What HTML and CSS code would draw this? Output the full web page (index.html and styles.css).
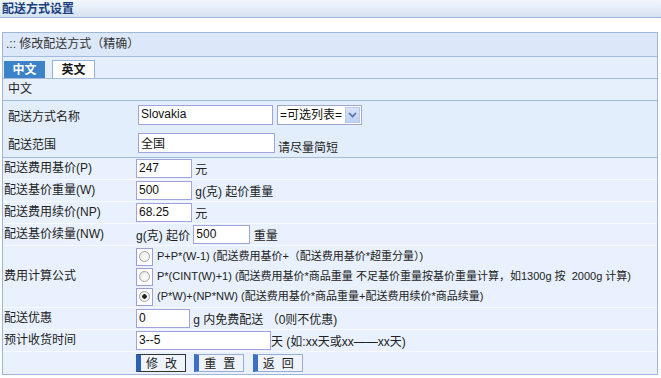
FILE: index.html
```html
<!DOCTYPE html>
<html lang="zh-CN">
<head>
    <meta charset="UTF-8">
    <title>配送方式设置</title>
    <link rel="stylesheet" href="styles.css">
</head>
<body>
    <div class="title">配送方式设置</div>
    <form class="panel">
        <div class="caption">.:: 修改配送方式（精确）</div>
        <div class="tabs">
            <span class="tab on">中文</span>
            <span class="tab off">英文</span>
        </div>
        <div class="lang">中文</div>
        <div class="names">
            <div class="row">
                <span class="label">配送方式名称</span>
                <input type="text" class="txt w135" value="Slovakia">
                <span class="pick">
                    <select><option>=可选列表=</option></select>
                    <span class="arrow"><svg width="9" height="6" viewBox="0 0 9 6"><path d="M1 1 L4.5 4.5 L8 1" fill="none" stroke="#4d6fa8" stroke-width="1.6"/></svg></span>
                </span>
            </div>
            <div class="row">
                <span class="label">配送范围</span>
                <input type="text" class="txt w137" value="全国">
                <span class="hint">请尽量简短</span>
            </div>
        </div>
        <table class="fields">
            <tr>
                <td class="label">配送费用基价(P)</td>
                <td class="val"><input type="text" class="txt w56" value="247"> <span class="unit">元</span></td>
            </tr>
            <tr>
                <td class="label">配送基价重量(W)</td>
                <td class="val"><input type="text" class="txt w56" value="500"> <span class="unit">g(克) 起价重量</span></td>
            </tr>
            <tr>
                <td class="label">配送费用续价(NP)</td>
                <td class="val"><input type="text" class="txt w56" value="68.25"> <span class="unit">元</span></td>
            </tr>
            <tr>
                <td class="label">配送基价续量(NW)</td>
                <td class="val"><span class="unit">g(克) 起价</span> <input type="text" class="txt w57" value="500"> <span class="unit">重量</span></td>
            </tr>
            <tr class="tall">
                <td class="label">费用计算公式</td>
                <td class="val">
                    <div class="opt"><span class="rbox"><input type="radio" name="way"></span>P+P*(W-1) (配送费用基价+（配送费用基价*超重分量）)</div>
                    <div class="opt"><span class="rbox"><input type="radio" name="way"></span>P*(CINT(W)+1) (配送费用基价*商品重量 不足基价重量按基价重量计算，如1300g 按 &nbsp;2000g 计算)</div>
                    <div class="opt"><span class="rbox"><input type="radio" name="way" checked></span>(P*W)+(NP*NW) (配送费用基价*商品重量+配送费用续价*商品续量)</div>
                </td>
            </tr>
            <tr>
                <td class="label">配送优惠</td>
                <td class="val"><input type="text" class="txt w54" value="0"> <span class="unit">g 内免费配送 （0则不优惠)</span></td>
            </tr>
            <tr>
                <td class="label">预计收货时间</td>
                <td class="val"><input type="text" class="txt w135" value="3--5"><span class="unit">天 (如:xx天或xx——xx天)</span></td>
            </tr>
            <tr class="last">
                <td class="label"></td>
                <td class="val">
                    <button type="button" class="btn focus">修改</button>
                    <button type="button" class="btn">重置</button>
                    <button type="button" class="btn">返回</button>
                </td>
            </tr>
        </table>
    </form>
</body>
</html>
```
FILE: styles.css
```css
body {
    margin: 0;
    font-family: "Liberation Sans", "Noto Sans CJK SC", sans-serif;
    font-size: 12px;
    color: #222;
    background: #fff;
}
.title {
    height: 17px;
    line-height: 18px;
    padding-left: 2px;
    font-weight: bold;
    color: #1b3f7c;
    background: linear-gradient(#f3f7fc, #d6e3f4);
    border-bottom: 1px solid #9ab4d6;
}
.panel {
    margin: 14px 3px 0 2px;
    border: 1px solid #9fb6d5;
}
.caption {
    height: 23px;
    line-height: 23px;
    padding-left: 3px;
    color: #333;
    background: #dce8fa;
    border-bottom: 1px solid #a3bad8;
}
.tabs {
    height: 21px;
    display: flex;
    align-items: flex-end;
    gap: 7px;
    padding-left: 1px;
    background: #e4eefc;
    border-bottom: 1px solid #a3bad8;
}
.tab {
    width: 41px;
    height: 17px;
    line-height: 18px;
    text-align: center;
    font-weight: bold;
}
.tab.on {
    background: #3c82c9;
    color: #fff;
}
.tab.off {
    height: 17px;
    background: #fff;
    border: 1px solid #95b3d8;
    border-bottom: 0;
    color: #1a1a1a;
}
.lang {
    height: 21px;
    line-height: 21px;
    padding-left: 5px;
    background: #e6f0fd;
    border-bottom: 1px solid #a3bad8;
}
.names {
    padding-left: 5px;
    background: #e3eefc;
    border-bottom: 1px solid #a3bad8;
}
.names .row {
    display: flex;
    align-items: center;
    height: 28px;
}
.names .label {
    width: 130px;
}
.hint {
    margin-left: 3px;
    padding-top: 7px;
}
.txt {
    box-sizing: border-box;
    height: 19px;
    border: 1px solid #a3a3dc;
    padding: 0 2px 2px;
    font-family: "Liberation Sans", "Noto Sans CJK SC", sans-serif;
    font-size: 12px;
    color: #111;
    background: #fff;
    vertical-align: middle;
}
.names .txt { height: 20px; }
.w135 { width: 135px; }
.w137 { width: 137px; }
.w56 { width: 56px; }
.w57 { width: 57px; }
.w54 { width: 54px; }
.pick {
    display: inline-flex;
    align-items: center;
    box-sizing: border-box;
    height: 20px;
    margin-left: 4px;
    padding-right: 1px;
    border: 1px solid #a0a6c8;
    background: #fff;
}
.pick select {
    appearance: none;
    border: 0;
    background: transparent;
    padding: 0 2px;
    font-family: "Liberation Sans", "Noto Sans CJK SC", sans-serif;
    font-size: 12px;
    color: #111;
}
.arrow {
    display: flex;
    align-items: center;
    justify-content: center;
    width: 15px;
    height: 16px;
    background: linear-gradient(#d7e3f8, #bcd0f2);
    border: 1px solid #b7c8ea;
    box-sizing: border-box;
}
.fields {
    width: 100%;
    border-collapse: collapse;
}
.fields td {
    height: 21px;
    padding: 0;
    line-height: 15px;
    background: #e8f1fd;
    border-bottom: 1px solid #f7faff;
}
.fields .last td {
    height: 22px;
    border-bottom: 0;
}
.fields .label {
    width: 131px;
    padding-left: 1px;
}
.fields .val {
    padding-left: 1px;
}
.unit {
    display: inline-block;
    padding-top: 4px;
    vertical-align: middle;
}
.tall td {
    height: 61px;
}
.opt {
    display: flex;
    align-items: center;
    height: 20px;
    font-size: 11px;
    white-space: nowrap;
}
.rbox {
    display: flex;
    align-items: center;
    justify-content: center;
    box-sizing: border-box;
    width: 17px;
    height: 18px;
    margin-right: 4px;
    border: 1px solid #9e9ed6;
    background: #fff;
}
.rbox input {
    appearance: none;
    width: 11px;
    height: 11px;
    margin: 0;
    border: 1px solid #a8a8a8;
    border-radius: 50%;
    background: radial-gradient(circle at 60% 60%, #fff, #e2e2e2);
}
.rbox input:checked {
    background: radial-gradient(circle, #222 0 2px, transparent 2.5px), radial-gradient(circle at 60% 60%, #fff, #e2e2e2);
}
.btn {
    box-sizing: border-box;
    width: 50px;
    height: 18px;
    margin: 0 5px 0 0;
    padding: 0 0 0 4px;
    border: 1px solid #9aaed3;
    border-left: 5px solid #3d70c4;
    background: #eef3fc;
    font-family: "Noto Sans CJK SC", sans-serif;
    font-size: 12px;
    line-height: 14px;
    letter-spacing: 7px;
    color: #222;
    vertical-align: middle;
}
.btn.focus {
    border-color: #333;
    border-left-color: #2d5fb4;
}
```
